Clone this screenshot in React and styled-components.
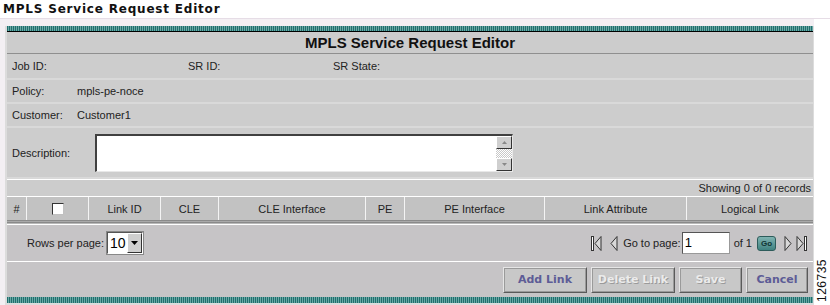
import React from "react";
import styled, { createGlobalStyle } from "styled-components";

const Global = createGlobalStyle`
  html, body { margin: 0; padding: 0; background: #ffffff; }
  body { font-family: "Liberation Sans", Arial, sans-serif; }
`;

const Page = styled.div`
  width: 830px;
  height: 305px;
  overflow: hidden;
  background: #ffffff;
`;

const PageTitle = styled.div`
  height: 18px;
  padding-left: 3px;
  font-family: "DejaVu Sans", Verdana, sans-serif;
  font-weight: bold;
  font-size: 12px;
  letter-spacing: 0.8px;
  line-height: 18px;
  color: #111;
`;

const Frame = styled.div`
  display: flex;
  height: 287px;
  background: #f3eff3;
  border-top: 1px solid #e6dde6;
`;

const Panel = styled.div`
  width: 806px;
  margin: 7px 0 0 5px;
  padding: 0 1px 0 2px;
  background: #dcdcdc;
  display: flex;
  flex-direction: column;
`;

const Side = styled.div`
  flex: 1;
  background: #ffffff;
  display: flex;
  align-items: flex-end;
  justify-content: center;
  padding-bottom: 4px;
`;

const FigNo = styled.div`
  writing-mode: vertical-rl;
  transform: rotate(180deg);
  font-size: 12px;
  letter-spacing: 0.5px;
  color: #111;
`;

const Teal = styled.div`
  height: ${(p) => p.$h || 5}px;
  flex: none;
  background: repeating-linear-gradient(90deg, #1f6f6d 0 1px, #6aa8a6 1px 2px);
`;

const Black = styled.div`
  height: 1px;
  background: #000;
`;

const Header = styled.div`
  height: 21px;
  background: #cccccc;
  border-bottom: 1px solid #8f8f8f;
  text-align: center;
  font-weight: bold;
  font-size: 15px;
  line-height: 22px;
  color: #111;
`;

const FormRow = styled.div`
  display: flex;
  align-items: center;
  height: ${(p) => p.$h}px;
  background: #cdcdcd;
  border-bottom: 2px solid #d9d9d9;
  font-size: 11px;
  color: #222;
  padding-left: 5px;
`;

const Label = styled.span`
  width: ${(p) => p.$w}px;
  flex: none;
`;

const Desc = styled.div`
  display: flex;
  width: 418px;
  height: 38px;
  background: #fff;
  border-top: 2px solid #404040;
  border-left: 2px solid #404040;
  border-right: 1px solid #e8e8e8;
  border-bottom: 1px solid #e8e8e8;
  box-sizing: border-box;
  justify-content: flex-end;
`;

const ScrollBar = styled.div`
  width: 16px;
  display: flex;
  flex-direction: column;
  justify-content: space-between;
  background: repeating-conic-gradient(#c8c8c8 0 25%, #ffffff 0 50%) 0 0 / 2px 2px;
`;

const ScrollBtn = styled.div`
  height: 13px;
  background: #cfcfcf;
  border-top: 1px solid #fff;
  border-left: 1px solid #fff;
  border-right: 1px solid #333;
  border-bottom: 1px solid #333;
  box-sizing: border-box;
  display: flex;
  align-items: center;
  justify-content: center;
`;

const WhiteLine = styled.div`
  height: 1px;
  background: #ffffff;
`;

const Showing = styled.div`
  height: 16px;
  background: #cccccc;
  text-align: right;
  padding-right: 2px;
  font-size: 11px;
  line-height: 17px;
  color: #222;
`;

const TableHead = styled.div`
  display: grid;
  grid-template-columns: 20px 62px 72px 58px 147px 39px 140px 142px 1fr;
  height: 23px;
  background: #c2c2c2;
`;

const Th = styled.div`
  display: flex;
  align-items: center;
  justify-content: center;
  font-size: 11px;
  color: #222;
  border-right: 1px solid #f4f4f4;
  &:last-child { border-right: none; }
`;

const Check = styled.div`
  width: 12px;
  height: 12px;
  background: #fff;
  border-top: 1px solid #333;
  border-left: 1px solid #333;
  border-right: 1px solid #c0c0c0;
  border-bottom: 1px solid #c0c0c0;
  box-sizing: border-box;
`;

const DarkBand = styled.div`
  height: 4px;
  background: linear-gradient(#8a8a8a 0 1px, #a9a9a9 1px 2px, #8a8a8a 2px 3px, #b9b9b9 3px 4px);
`;

const Bar = styled.div`
  display: flex;
  align-items: center;
  justify-content: ${(p) => p.$justify || "space-between"};
  height: ${(p) => p.$h}px;
  background: #c6c4c6;
  padding: 0 ${(p) => p.$pr || 6}px 0 ${(p) => p.$pl || 20}px;
  font-size: 11px;
  color: #222;
  gap: 4px;
`;

const Group = styled.div`
  display: flex;
  align-items: center;
`;

const Spacer = styled.span`
  display: inline-block;
  width: ${(p) => p.$w}px;
`;

const Select = styled.div`
  display: flex;
  width: 36px;
  height: 22px;
  margin-left: 3px;
  box-sizing: border-box;
  background: #fff;
  border-top: 1px solid #555;
  border-left: 1px solid #555;
  border-right: 1px solid #fff;
  border-bottom: 1px solid #fff;
  outline: 1px solid #888;
`;

const SelText = styled.div`
  flex: 1;
  font-size: 14px;
  line-height: 20px;
  padding-left: 2px;
  color: #000;
`;

const SelBtn = styled.div`
  width: 15px;
  background: #cfcfcf;
  border-left: 1px solid #fff;
  border-top: 1px solid #fff;
  border-right: 1px solid #333;
  border-bottom: 1px solid #333;
  box-sizing: border-box;
  display: flex;
  align-items: center;
  justify-content: center;
`;

const PageInput = styled.div`
  width: 44px;
  height: 20px;
  background: #fff;
  border: 1px solid #999;
  border-top-color: #555;
  border-left-color: #555;
  font-size: 13px;
  line-height: 20px;
  padding-left: 2px;
  color: #000;
  margin: 0 4px 0 1px;
`;

const GoBtn = styled.div`
  width: 17px;
  height: 13px;
  border-radius: 3px;
  background: linear-gradient(#7fb3b1, #3f8280);
  border: 1px solid #2d5c5b;
  font-size: 8px;
  font-weight: bold;
  color: #0f3433;
  line-height: 13px;
  text-align: center;
  margin: 0 8px 0 5px;
`;

const Btn = styled.div`
  width: ${(p) => p.$w}px;
  height: 26px;
  box-sizing: border-box;
  display: flex;
  align-items: center;
  justify-content: center;
  background: #c8c8c8;
  border: 1px solid #5a5a5a;
  border-top-color: #e6e6e6;
  border-left-color: #e6e6e6;
  outline: 1px solid #9a9a9a;
  outline-offset: -2px;
  font-family: "DejaVu Sans", Verdana, sans-serif;
  font-weight: bold;
  font-size: 11px;
  color: ${(p) => (p.$disabled ? "#ebebeb" : "#5d5c96")};
  text-shadow: ${(p) => (p.$disabled ? "1px 1px 0 #9a9a9a" : "none")};
`;

const Arrow = ({ dir }) => (
  <svg width="7" height="5" viewBox="0 0 7 5">
    {dir === "up" ? <path d="M1 4 L3.5 1 L6 4Z" fill="#888" /> : <path d="M1 1 L3.5 4 L6 1Z" fill="#888" />}
  </svg>
);

const DropArrow = () => (
  <svg width="7" height="4" viewBox="0 0 7 4">
    <path d="M0 0 H7 L3.5 4Z" fill="#000" />
  </svg>
);

const NavIcon = ({ kind }) => {
  const stroke = "#333";
  if (kind === "first")
    return (
      <svg width="11" height="17" viewBox="0 0 11 17">
        <rect x="0.5" y="1.5" width="2" height="14" fill="#fff" stroke={stroke} />
        <path d="M10 1.5 L4 8.5 L10 15.5Z" fill="#d8d8d8" stroke={stroke} />
      </svg>
    );
  if (kind === "prev")
    return (
      <svg width="8" height="17" viewBox="0 0 8 17">
        <path d="M7 1.5 L1 8.5 L7 15.5Z" fill="#d8d8d8" stroke={stroke} />
      </svg>
    );
  if (kind === "next")
    return (
      <svg width="8" height="17" viewBox="0 0 8 17">
        <path d="M1 1.5 L7 8.5 L1 15.5Z" fill="#d8d8d8" stroke={stroke} />
      </svg>
    );
  return (
    <svg width="11" height="17" viewBox="0 0 11 17">
      <path d="M1 1.5 L7 8.5 L1 15.5Z" fill="#d8d8d8" stroke={stroke} />
      <rect x="8.5" y="1.5" width="2" height="14" fill="#fff" stroke={stroke} />
    </svg>
  );
};

const columns = ["#", "check", "Link ID", "CLE", "CLE Interface", "PE", "PE Interface", "Link Attribute", "Logical Link"];

export default function App() {
  return (
    <Page>
      <Global />
      <PageTitle>MPLS Service Request Editor</PageTitle>
      <Frame>
        <Panel>
          <Teal />
          <Black />
          <Header>MPLS Service Request Editor</Header>
          <FormRow $h={24}>
            <Label $w={176}>Job ID:</Label>
            <Label $w={145}>SR ID:</Label>
            <Label $w={100}>SR State:</Label>
          </FormRow>
          <FormRow $h={22}>
            <Label $w={65}>Policy:</Label>
            <span>mpls-pe-noce</span>
          </FormRow>
          <FormRow $h={22}>
            <Label $w={65}>Customer:</Label>
            <span>Customer1</span>
          </FormRow>
          <FormRow $h={49}>
            <Label $w={83}>Description:</Label>
            <Desc>
              <ScrollBar>
                <ScrollBtn><Arrow dir="up" /></ScrollBtn>
                <ScrollBtn><Arrow dir="down" /></ScrollBtn>
              </ScrollBar>
            </Desc>
          </FormRow>
          <WhiteLine />
          <Showing>Showing 0 of 0 records</Showing>
          <WhiteLine />
          <TableHead>
            {columns.map((c) => (
              <Th key={c}>{c === "check" ? <Check /> : c}</Th>
            ))}
          </TableHead>
          <DarkBand />
          <WhiteLine />
          <Bar $h={36}>
            <Group>
              Rows per page:
              <Select>
                <SelText>10</SelText>
                <SelBtn><DropArrow /></SelBtn>
              </Select>
            </Group>
            <Group>
              <NavIcon kind="first" />
              <Spacer $w={8} />
              <NavIcon kind="prev" />
              <Spacer $w={5} />
              Go to page:
              <PageInput>1</PageInput>
              of 1
              <GoBtn>Go</GoBtn>
              <NavIcon kind="next" />
              <Spacer $w={4} />
              <NavIcon kind="last" />
            </Group>
          </Bar>
          <WhiteLine />
          <Bar $h={35} $justify="flex-end" $pr={5}>
            <Btn $w={84}>Add Link</Btn>
            <Btn $w={84} $disabled>Delete Link</Btn>
            <Btn $w={63} $disabled>Save</Btn>
            <Btn $w={62}>Cancel</Btn>
          </Bar>
          <Teal $h={6} />
        </Panel>
        <Side>
          <FigNo>126735</FigNo>
        </Side>
      </Frame>
    </Page>
  );
}
